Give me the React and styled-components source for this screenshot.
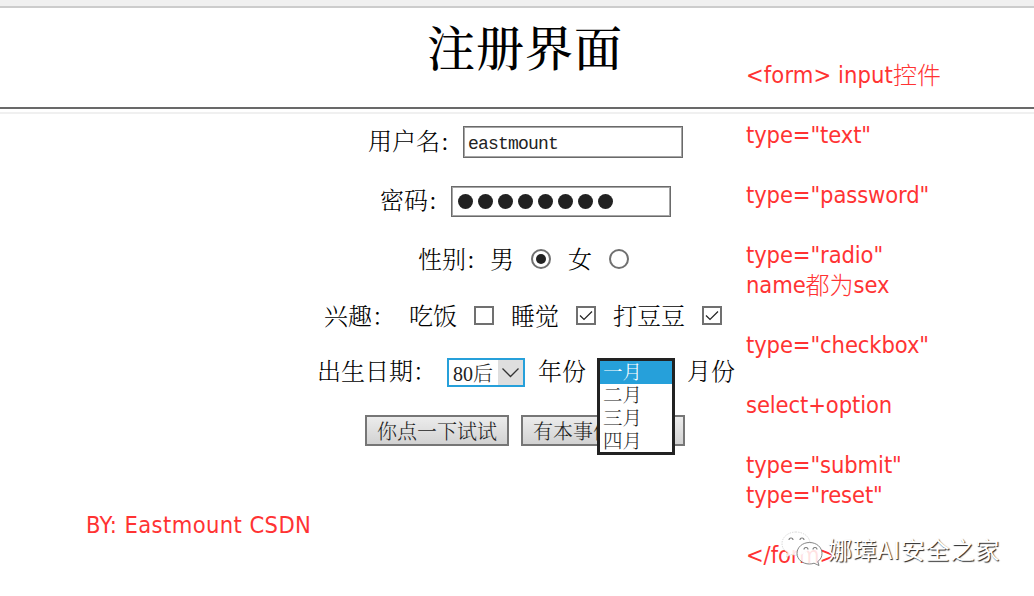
import React from "react";
import styled, { createGlobalStyle } from "styled-components";

const GlobalStyle = createGlobalStyle`
  * { box-sizing: border-box; }
  body {
    margin: 0;
    background: #fff;
    color: #000;
    font-family: "Noto Serif CJK SC", "Noto Sans CJK SC", serif;
    font-weight: 300;
  }
`;

const Page = styled.div`
  position: relative;
  width: 1034px;
  height: 596px;
  overflow: hidden;
  display: flex;
  flex-direction: column;
`;

const TopEdge = styled.div`
  flex: none;
  height: 8px;
  background: #f0f0f0;
  border-bottom: 2px solid #ccc;
`;

const Header = styled.header`
  flex: none;
  height: 99px;
  padding: 13px 0 0 427px;
`;

const Title = styled.h1`
  margin: 0;
  font-size: 48px;
  font-weight: 500;
  line-height: 50px;
  letter-spacing: 1px;
  white-space: nowrap;
`;

const FrameBar = styled.div`
  flex: none;
  height: 7px;
  border-top: 2px solid #696969;
  border-bottom: 2px solid #f0f0f0;
`;

const Form = styled.form`
  flex: none;
  width: 431px;
  margin: 12px 0 0 310px;
  display: flex;
  flex-direction: column;
`;

const Row = styled.div`
  display: flex;
  align-items: center;
  height: ${(p) => p.$h}px;
  padding-left: ${(p) => p.$left}px;
  margin-bottom: ${(p) => p.$gap}px;
`;

const Label = styled.span`
  flex: none;
  width: ${(p) => p.$w}px;
  font-size: 24px;
  line-height: 28px;
  white-space: nowrap;
  margin-top: ${(p) => (p.$low ? -2 : -5)}px;
`;

const Colon = styled.span`
  margin-left: 1px;
`;

const Field = styled.div`
  width: 220px;
  height: 100%;
  border: 1px solid #6a6a6a;
  box-shadow: inset 0 0 0 1px #a6a6a6;
  display: flex;
  align-items: center;
  gap: 5px;
  padding: ${(p) => p.$pad};
  color: #222;
  font: 18px/24px "Liberation Mono", monospace;
  letter-spacing: -0.8px;
`;

const Dot = styled.i`
  width: 15px;
  height: 15px;
  border-radius: 50%;
  background: #222;
`;

const Radio = styled.span`
  width: 20px;
  height: 20px;
  margin-right: ${(p) => p.$after}px;
  border: 2px solid #707070;
  border-radius: 50%;
  display: flex;
  align-items: center;
  justify-content: center;
  &::after {
    content: "";
    width: 10px;
    height: 10px;
    border-radius: 50%;
    background: ${(p) => (p.$on ? "#222" : "transparent")};
  }
`;

const Check = styled.span`
  width: 20px;
  height: 19px;
  margin-right: ${(p) => p.$after}px;
  border: 2px solid #707070;
  display: flex;
  svg { display: block; }
`;

const YearSelect = styled.div`
  width: 78px;
  height: 29px;
  margin-right: 13px;
  border: 2px solid #26a0da;
  display: flex;
  color: #222;
  font-size: 20px;
  line-height: 25px;
`;

const YearValue = styled.span`
  flex: 1;
  padding-left: 4px;
  white-space: nowrap;
  b { font: 20px/25px "Liberation Serif", serif; }
`;

const Arrow = styled.span`
  width: 25px;
  background: #dedede;
  svg { display: block; }
`;

const MonthAnchor = styled.div`
  position: relative;
  width: 78px;
  height: 29px;
  margin-right: 12px;
`;

const MonthList = styled.ul`
  position: absolute;
  z-index: 1;
  top: 0;
  left: 0;
  width: 78px;
  height: 97px;
  margin: 0;
  padding: 0;
  list-style: none;
  background: #fff;
  border: 3px solid #222;
`;

const Month = styled.li`
  height: 23px;
  padding-left: 3px;
  font-size: 19.5px;
  line-height: 21px;
  color: ${(p) => (p.$on ? "#fff" : "#222")};
  background: ${(p) => (p.$on ? "#26a0da" : "transparent")};
`;

const Button = styled.button`
  width: ${(p) => p.$w}px;
  height: 31px;
  margin-right: 12px;
  padding: 0 0 0 10px;
  border: 2px solid #767676;
  border-radius: 0;
  background: linear-gradient(#ececec, #d2d2d2);
  color: #222;
  font: inherit;
  font-size: 20px;
  line-height: 24px;
  text-align: left;
  white-space: nowrap;
`;

const Notes = styled.aside`
  position: absolute;
  top: 59px;
  left: 746px;
  color: #ff3333;
  font-family: "Noto Sans CJK SC", sans-serif;
  font-size: 24px;
  line-height: 30px;
`;

const Note = styled.div`
  display: flex;
  height: 30px;
  margin-bottom: ${(p) => (p.$tight ? 0 : 30)}px;
  white-space: pre;
`;

const Latin = styled.span`
  font-family: "DejaVu Sans Condensed", "DejaVu Sans", sans-serif;
  font-stretch: condensed;
  font-weight: 400;
  font-size: 23.5px;
  line-height: 32px;
  letter-spacing: ${(p) => p.$ls ?? -0.1}px;
`;

const Byline = styled.footer`
  margin: 63px 0 0 86px;
  color: #ff3333;
  line-height: 32px;
  white-space: nowrap;
`;

const Watermark = styled.div`
  position: absolute;
  left: 780px;
  top: 529px;
  display: flex;
  color: #fff;
  font: 400 24px/40px "Noto Sans CJK SC", sans-serif;
  letter-spacing: 0.8px;
  text-shadow: 1px 1px 1px #222;
  white-space: nowrap;
`;

const Tick = ({ after }) => (
  <Check $after={after}>
    <svg width="16" height="15" viewBox="0 0 16 15">
      <path d="M2 7.500 L6 11.500 L14 3.500" fill="none" stroke="#222" strokeWidth="1.2" />
    </svg>
  </Check>
);

const WeChat = () => (
  <svg width="48" height="40" viewBox="0 0 48 40">
    <path d="M16 3C8.300 3 2 8 2 14.500c0 4 2 7 5.500 9L6.500 28l5-2.500c2 .6 4 .8 6 .6C28 25 30 19 30 14.500 30 8 23.700 3 16 3Z" fill="#fff" fillOpacity=".88" stroke="#ccc" strokeWidth=".7" strokeDasharray="1.500 1" />
    <path d="M29.500 13.500c-7 0-12.500 4.800-12.500 10.800S22.500 35 29.500 35c1.700 0 3.200-.3 4.500-.8l5 2.300-1.200-4c3-2 4.200-5 4.200-8.200C42 18.300 36.500 13.500 29.500 13.500Z" fill="#fff" fillOpacity=".86" stroke="#666" strokeWidth=".8" />
    <path d="M9 11a2 2 0 0 1 4 0M20 11a2 2 0 0 1 4 0M24 20.500a2 2 0 0 1 4 0M33 20.500a2 2 0 0 1 4 0" fill="none" stroke="#777" strokeWidth="1.1" />
  </svg>
);

export default function App() {
  return (
    <Page>
      <GlobalStyle />
      <TopEdge />
      <Header>
        <Title>注册界面</Title>
      </Header>
      <FrameBar />
      <Form>
        <Row $h={32} $left={58} $gap={28}>
          <Label $w={95}>用户名<Colon>:</Colon></Label>
          <Field $pad="3px 0 0 4px">eastmount</Field>
        </Row>
        <Row $h={31} $left={70} $gap={32}>
          <Label $w={71}>密码<Colon>:</Colon></Label>
          <Field $pad="0 0 0 6px">
            {Array.from({ length: 8 }, (_, i) => <Dot key={i} />)}
          </Field>
        </Row>
        <Row $h={20} $left={108} $gap={37}>
          <Label $low $w={72}>性别<Colon>:</Colon></Label>
          <Label $low $w={41}>男</Label>
          <Radio $on $after={17} />
          <Label $low $w={41}>女</Label>
          <Radio $after={4} />
        </Row>
        <Row $h={19} $left={14} $gap={33}>
          <Label $low $w={85}>兴趣：</Label>
          <Label $low $w={65}>吃饭</Label>
          <Check $after={17} />
          <Label $low $w={65}>睡觉</Label>
          <Tick after={17} />
          <Label $low $w={89}>打豆豆</Label>
          <Tick after={4} />
        </Row>
        <Row $h={29} $left={7} $gap={28}>
          <Label $w={130}>出生日期：</Label>
          <YearSelect>
            <YearValue><b>80</b>后</YearValue>
            <Arrow>
              <svg width="25" height="25" viewBox="0 0 25 25">
                <path d="M4.500 8.500 L12.500 16.500 L20.500 8.500" fill="none" stroke="#333" strokeWidth="1.3" />
              </svg>
            </Arrow>
          </YearSelect>
          <Label $w={59}>年份</Label>
          <MonthAnchor>
            <MonthList>
              <Month $on>一月</Month>
              <Month>二月</Month>
              <Month>三月</Month>
              <Month>四月</Month>
            </MonthList>
          </MonthAnchor>
          <Label $w={48}>月份</Label>
        </Row>
        <Row $h={31} $left={55} $gap={0}>
          <Button type="button" $w={144}>你点一下试试</Button>
          <Button type="button" $w={164}>有本事你</Button>
        </Row>
      </Form>
      <Byline><Latin $ls={0.4}>BY: Eastmount CSDN</Latin></Byline>
      <Notes>
        <Note><Latin $ls={0.1}>{"<form> input"}</Latin>控件</Note>
        <Note><Latin>type="text"</Latin></Note>
        <Note><Latin>type="password"</Latin></Note>
        <Note $tight><Latin>type="radio"</Latin></Note>
        <Note><Latin>name</Latin>都为<Latin>sex</Latin></Note>
        <Note><Latin>type="checkbox"</Latin></Note>
        <Note><Latin>select+option</Latin></Note>
        <Note $tight><Latin>type="submit"</Latin></Note>
        <Note><Latin>type="reset"</Latin></Note>
        <Note><Latin>{"</form>"}</Latin></Note>
      </Notes>
      <Watermark><WeChat />娜璋AI安全之家</Watermark>
    </Page>
  );
}
